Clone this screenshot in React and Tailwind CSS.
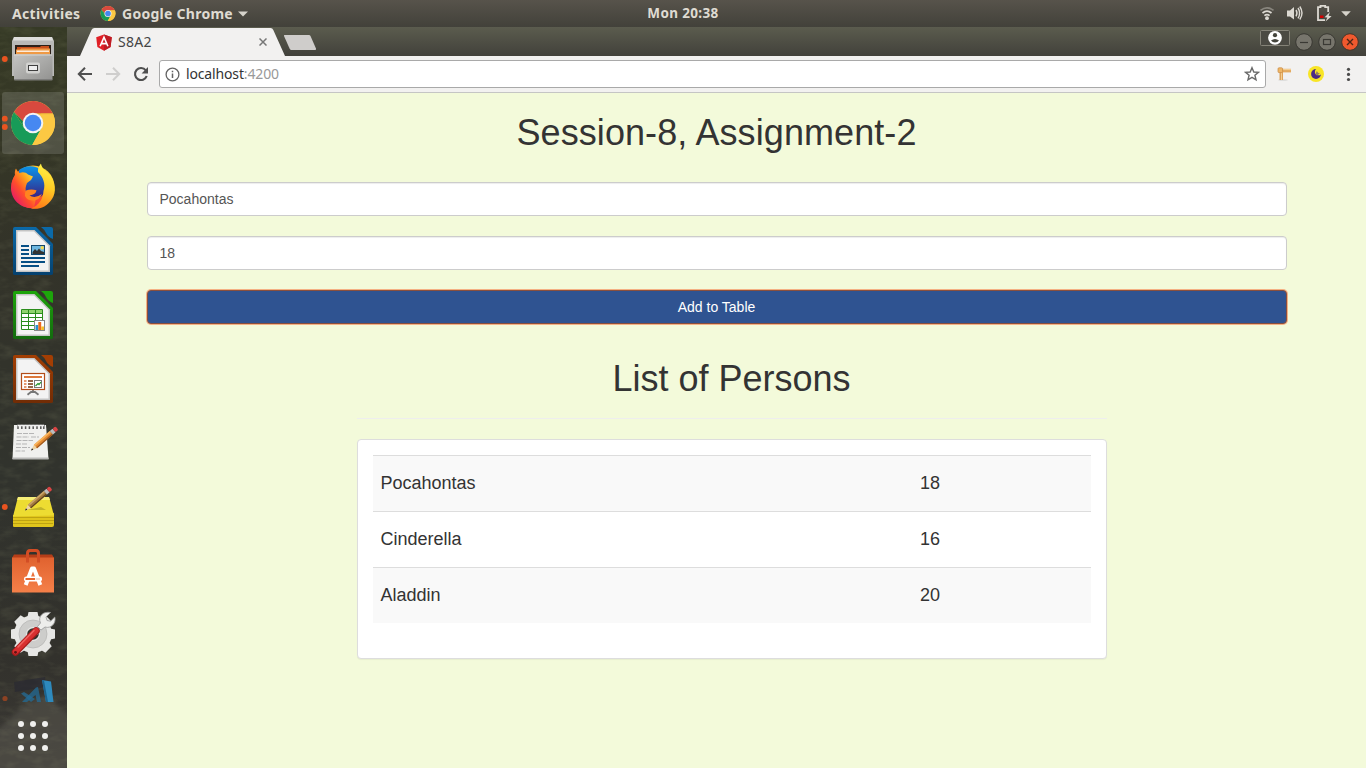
import React from "react";

const persons = [
  { name: "Pocahontas", age: 18 },
  { name: "Cinderella", age: 16 },
  { name: "Aladdin", age: 20 },
];

function ChromeLogo({ cx, cy, r }) {
  return (
    <g transform={`translate(${cx} ${cy}) scale(${r / 22})`}>
      <circle r="22" fill="#fcc843" />
      <path d="M-19.05 -11A22 22 0 0 1 19.9 -9.4H0L-9.4 -1Z" fill="#d8493e" />
      <path d="M-19.05 -11A22 22 0 0 0 -0.8 22L8.5 5.2L-8.7 5Z" fill="#189b58" />
      <path d="M19.9 -9.4A22 22 0 0 1 -0.8 22L8.7 5L8 -9.4Z" fill="#fcc843" />
      <path d="M-19.05 -11L-9.4 -1L-8.7 5Z" fill="#15884c" />
      <path d="M0 -10H20L19.9 -8.8H5Z" fill="#e2a334" opacity=".5" />
      <circle r="10.3" fill="#f4f4f4" />
      <circle r="8.3" fill="#4688f1" />
    </g>
  );
}

function Slot({ children, dots = [], active = false }) {
  return (
    <svg className="block h-16 w-[67px] shrink-0" viewBox="0 0 67 64">
      {active && <rect x="2" y="1" width="62" height="62" rx="3" fill="#fff" opacity=".14" />}
      {dots.map((y) => (
        <circle key={y} cx="4.8" cy={y} r="2.9" fill="#e95420" />
      ))}
      {children}
    </svg>
  );
}

function FilesIcon() {
  return (
    <Slot dots={[32]}>
      <defs>
        <linearGradient id="cab" x1="0" y1="0" x2="1" y2="1">
          <stop offset="0" stopColor="#c4c4c2" />
          <stop offset="1" stopColor="#929290" />
        </linearGradient>
      </defs>
      <path d="M14 10H52L54 14V49H12V14Z" fill="#b9b9b7" />
      <path d="M14 10H52L53 13.5H13Z" fill="#dededc" />
      <rect x="15" y="18" width="36" height="10" fill="#2c2018" />
      <path d="M17 20H40L41 19H49V28H17Z" fill="#c9501b" />
      <path d="M16 22.5H20L21 21.5H50V28H16Z" fill="#ef9a45" />
      <rect x="17" y="23.6" width="32" height="1.2" fill="#fff" />
      <rect x="14" y="27.3" width="38.5" height="26" rx="1" fill="url(#cab)" />
      <path d="M14 28H52" stroke="#d6d6d4" />
      <rect x="26" y="35.5" width="14" height="11" rx="2" fill="#d2d2d0" />
      <rect x="28.5" y="38.5" width="9" height="5" fill="#eee" stroke="#3f3f3f" />
      <rect x="14" y="52.3" width="38.5" height="1" fill="#71716f" />
    </Slot>
  );
}

function FirefoxIcon() {
  return (
    <Slot>
      <defs>
        <linearGradient id="fx" x1=".9" y1=".05" x2=".15" y2=".9">
          <stop offset="0" stopColor="#fff33f" />
          <stop offset=".35" stopColor="#ff9a1c" />
          <stop offset=".62" stopColor="#ff4e2b" />
          <stop offset="1" stopColor="#e4166b" />
        </linearGradient>
        <linearGradient id="fxb" x1="0" y1="0" x2="0" y2="1">
          <stop offset="0" stopColor="#0a95ea" />
          <stop offset="1" stopColor="#3a1c80" />
        </linearGradient>
        <linearGradient id="fxt" x1=".6" y1="0" x2=".4" y2="1">
          <stop offset="0" stopColor="#fff44a" />
          <stop offset=".5" stopColor="#ffcb24" />
          <stop offset="1" stopColor="#ff7a19" />
        </linearGradient>
      </defs>
      <circle cx="33" cy="32" r="21.5" fill="url(#fx)" />
      <path d="M19 15Q27 9 37 12.5Q47 17 47 29Q46 42 35 44Q22 43 19 30Z" fill="url(#fxb)" />
      <path d="M16 13.5C17 15.5 18 17 19.5 18C23 16.5 26 17.5 28 19.5L33 21.5L31 25L27 28L26 31C24 37 29 43 36 43L34 53C20 54 11 44 11 33C11 27 13 23 15 20C14.5 17.5 15 15 16 13.5Z" fill="url(#fx)" />
      <path d="M41 8.5C41.5 13 46 17 50 20C55 27 57 37 52 44C47 52 39 55 31 53.5C40 50 43 43 43.5 36C46 29 43 22 38 17C37.5 14 39 11 41 8.5Z" fill="url(#fxt)" />
      <path d="M26 35.5Q31 33.5 36.5 35.3Q36 39.5 29.5 40.5Q35 44 42 39Q38 48 28 44.5Q23 41 26 35.5Z" fill="#ff8420" />
    </Slot>
  );
}

function OfficeDoc({ id, top, bottom, children }) {
  return (
    <Slot>
      <defs>
        <linearGradient id={id} x1="0" y1="0" x2="0" y2="1">
          <stop offset="0" stopColor={top} />
          <stop offset="1" stopColor={bottom} />
        </linearGradient>
      </defs>
      <path d="M15 8H36L53 25V54.5Q53 56 51 56H15Q13 56 13 54.5V10Q13 8 15 8Z" fill={`url(#${id})`} />
      <path d="M41 8H51Q53 8 53 10V20Q48 18 46 14Q44 10 41 8Z" fill={top} />
      <path d="M16 11H34.5L50 26.5V53H16Z" fill="#c4c4c4" />
      <path d="M17.5 12.5H34L48.5 27V51.5H17.5Z" fill="#f3f3f3" />
      {children}
    </Slot>
  );
}

function WriterIcon() {
  return (
    <OfficeDoc id="doc-writer" top="#0b69a8" bottom="#05416f">
      <path d="M21 27H29M21 31H29M21 35H29M21 39H45M21 43H45M21 47H39" stroke="#074f85" strokeWidth="1.9" />
      <rect x="31.5" y="26.5" width="13" height="9" fill="#6db6e0" stroke="#12466c" />
      <path d="M32.5 35V33L35 30L37 32L39 29.5L41 32L44 33V35Z" fill="#333" />
      <circle cx="42.2" cy="28.7" r="1.7" fill="#f8d84b" />
    </OfficeDoc>
  );
}

function CalcIcon() {
  return (
    <OfficeDoc id="doc-calc" top="#1da50b" bottom="#136a0e">
      <rect x="21.5" y="26.5" width="21" height="20" fill="#fff" />
      <rect x="21.5" y="26.5" width="21" height="4" fill="#8fd36d" />
      <path d="M21.5 26.5H42.5V46.5H21.5ZM21.5 30.5H42.5M21.5 34.5H42.5M21.5 38.5H42.5M21.5 42.5H42.5M28.5 26.5V46.5M35.5 26.5V46.5" fill="none" stroke="#2a8c1c" strokeWidth="1" />
      <rect x="34.5" y="37.5" width="10" height="10" fill="#fff" stroke="#888" />
      <rect x="35.5" y="42" width="2.8" height="5" fill="#2a90cf" />
      <rect x="38.3" y="39" width="2.9" height="8" fill="#ed6b1e" />
      <rect x="41.2" y="43.5" width="2.8" height="3.5" fill="#f7bf28" />
    </OfficeDoc>
  );
}

function ImpressIcon() {
  return (
    <OfficeDoc id="doc-impress" top="#a33e03" bottom="#712c05">
      <path d="M33 43V46M27.5 47.8L31 45H35L38.5 47.8" fill="none" stroke="#777" strokeWidth="1.8" />
      <rect x="21.5" y="26.5" width="23" height="16" fill="#fff" stroke="#b24d19" strokeWidth="1.2" />
      <path d="M24 30H42" stroke="#da6a28" strokeWidth="1.8" />
      <path d="M24 34H26.5M24 37H26.5M24 40H26.5" stroke="#dc7943" strokeWidth="1.4" />
      <path d="M28 34H33M28 37H33M28 40H33" stroke="#74350e" strokeWidth="1.4" />
      <rect x="34.5" y="33.5" width="7" height="7" fill="#fff" stroke="#777" />
      <path d="M35.5 39L38 36.5L39 37.5L41 35" fill="none" stroke="#25942b" strokeWidth="1.2" />
    </OfficeDoc>
  );
}

function Pencil({ x, y, length = 32, dark = false }) {
  return (
    <g transform={`translate(${x} ${y}) rotate(-41)`}>
      <path d="M0 0L6 -2.4V2.4Z" fill="#eed3a2" />
      <path d="M0 0L2.2 -1V1Z" fill="#222" />
      <rect x="6" y="-2.4" width={length - 13} height="4.8" fill={dark ? "#a47a3e" : "#e48a31"} />
      <rect x="6" y="-2.4" width={length - 13} height="1.6" fill={dark ? "#c9a468" : "#f9b65f"} />
      <rect x="6" y="1.1" width={length - 13} height="1.3" fill={dark ? "#62441e" : "#9d5820"} />
      <rect x={length - 7} y="-2.4" width="3.5" height="4.8" fill="#bdbdbd" />
      <rect x={length - 3.5} y="-2.4" width="3.8" height="4.8" rx="1.5" fill="#d94444" />
    </g>
  );
}

function EditorIcon() {
  return (
    <Slot>
      <path d="M14 14H46L48.5 48H12.5Z" fill="#f0f0ee" />
      <path d="M12.5 46.5H48.3L48.6 48.5H12.5Z" fill="#b8b8b6" />
      <path d="M18 13.5V18M21.8 13.5V18M25.6 13.5V18M29.4 13.5V18M33.2 13.5V18M37 13.5V18M40.8 13.5V18M43.8 13.5V18" stroke="#555" strokeWidth="1.5" />
      <path d="M17.5 14.5H44" stroke="#eee" strokeWidth="1.6" />
      <path d="M17 22.5H34M16.5 26H29M31 26H39M16.5 29.5H33M16 33H27M16 36.5H30M15.5 40H25" stroke="#b5b5b5" strokeDasharray="5 1" />
      <Pencil x="31" y="39.5" length={34} />
    </Slot>
  );
}

function NotesIcon() {
  return (
    <Slot dots={[32]}>
      <path d="M13 40L54 38V50Q54 52 52 52H14Q13 52 13 51Z" fill="#e0c51c" />
      <path d="M18 22H49L54 40.5L13 41.5Z" fill="#eddc32" />
      <path d="M18 22H49L50 25H17Z" fill="#f6ee78" />
      <path d="M13 42.5H54M13 45.5H54M13 48.5H53" stroke="#b59b10" strokeWidth=".8" />
      <path d="M27 35H46L41 32Z" fill="#8f8420" opacity=".45" />
      <Pencil x={25} y={35.5} length={34} dark />
    </Slot>
  );
}

function SoftwareIcon() {
  return (
    <Slot>
      <defs>
        <linearGradient id="bag" x1="0" y1="0" x2="0" y2="1">
          <stop offset="0" stopColor="#e0622f" />
          <stop offset="1" stopColor="#f58049" />
        </linearGradient>
      </defs>
      <path d="M14 15.5H52L54 19H12Z" fill="#b63e18" />
      <rect x="12" y="18.5" width="42" height="35" fill="url(#bag)" />
      <path d="M27.5 23.5V14.5Q27.5 11.5 30 11.5H36Q38.5 11.5 38.5 14.5V23.5" fill="none" stroke="#d24d25" strokeWidth="3" />
      <path d="M25.7 46L32 29.5H34L40.3 46" fill="none" stroke="#fff" strokeWidth="4" strokeLinejoin="round" />
      <rect x="24" y="37.5" width="18" height="5" rx="2.3" fill="#fff" />
      <path d="M25.5 40H35" stroke="#e76630" strokeWidth="2" />
      <path d="M35.5 40H40" stroke="#f7cdb8" strokeWidth="1.5" />
    </Slot>
  );
}

function SettingsIcon() {
  const teeth = [0, 45, 90, 135, 180, 225, 270, 315];
  return (
    <Slot>
      <g transform="translate(33 31)">
        {teeth.map((a) => (
          <path key={a} d="M-5.8 -16L-4.5 -22H4.5L5.8 -16Z" fill="#e6e6e4" transform={`rotate(${a})`} />
        ))}
        <circle r="12.3" fill="none" stroke="#e6e6e4" strokeWidth="13" />
        <circle r="10.5" fill="none" stroke="#cdcdcb" strokeWidth="7" />
        <circle r="14" fill="none" stroke="#b5b5b3" strokeWidth=".7" />
      </g>
      <path d="M35 30L43 22" stroke="#c8c8c8" strokeWidth="6" />
      <path d="M50.5 9.5L46 14L47 17.5L50.5 18.2L54.8 14C56.5 20 51 26 45 24L41 27L37.5 23.5L40.5 20C37.5 13.5 43 8 50.5 9.5Z" fill="#ededeb" stroke="#999" strokeWidth=".8" />
      <path d="M15.5 49L36 28" stroke="#a51b1b" strokeWidth="7.4" strokeLinecap="round" />
      <path d="M15.5 48.6L36 27.6" stroke="#d83030" strokeWidth="5.4" strokeLinecap="round" />
      <path d="M18 44L34 27.5" stroke="#ef6460" strokeWidth="1.5" strokeLinecap="round" />
      <circle cx="15.5" cy="49.3" r="1.4" fill="#5d1212" />
    </Slot>
  );
}

function CodeIcon() {
  return (
    <svg className="block h-9 w-[67px] shrink-0" viewBox="0 0 67 36">
      <path d="M14 15L45 10L46 20L15 25Z" fill="#292932" opacity=".7" />
      <path d="M42 13L51 14.5L53.5 35H46Z" fill="#2e8abd" />
      <path d="M42 13L44 13.4L48 35H46Z" fill="#1c638e" />
      <path d="M21 26.5L24 25L35 32L31 35Z" fill="#246c95" opacity=".75" />
      <path d="M36 20.5L38 20L41 35H37L35.5 28L27 35H22Z" fill="#236b96" opacity=".75" />
      <circle cx="5" cy="31.5" r="2.6" fill="#8c4223" />
    </svg>
  );
}

function Wallpaper() {
  return (
    <svg className="absolute inset-0 h-full w-full" viewBox="0 0 67 741" preserveAspectRatio="none">
      <defs>
        <linearGradient id="wall" x1="0" y1="0" x2="0" y2="1">
          <stop offset="0" stopColor="#363a26" />
          <stop offset=".12" stopColor="#353725" />
          <stop offset=".3" stopColor="#333329" />
          <stop offset=".6" stopColor="#31332d" />
          <stop offset=".85" stopColor="#32312c" />
          <stop offset="1" stopColor="#3b3935" />
        </linearGradient>
        <filter id="grain" x="0" y="0" width="100%" height="100%">
          <feTurbulence type="fractalNoise" baseFrequency=".06 .13" numOctaves="3" seed="8" />
          <feColorMatrix values="0 0 0 0 .42  0 0 0 0 .44  0 0 0 0 .24  1.6 0 0 0 -.68" />
        </filter>
        <filter id="soft"><feGaussianBlur stdDeviation="2" /></filter>
      </defs>
      <rect width="67" height="741" fill="url(#wall)" />
      <path d="M-5 705L22 680L45 668L72 690V745H-5Z" fill="#55524c" opacity=".6" filter="url(#soft)" />
      <rect width="67" height="741" filter="url(#grain)" opacity=".16" />
    </svg>
  );
}

function Dock() {
  return (
    <aside className="relative h-[741px] w-[67px] shrink-0 overflow-hidden bg-[#35362a]">
      <Wallpaper />
      <div className="relative flex flex-col">
        <FilesIcon />
        <Slot active dots={[27.7, 36]}>
          <ChromeLogo cx={33} cy={32} r={22} />
        </Slot>
        <FirefoxIcon />
        <WriterIcon />
        <CalcIcon />
        <ImpressIcon />
        <EditorIcon />
        <NotesIcon />
        <SoftwareIcon />
        <SettingsIcon />
        <CodeIcon />
        <svg className="block h-[65px] w-[67px]" viewBox="0 0 67 65">
          {[21, 33, 45].map((y) =>
            [21, 33, 45].map((x) => <circle key={`${x}-${y}`} cx={x} cy={y} r="3" fill="#f0f0ee" />)
          )}
        </svg>
      </div>
    </aside>
  );
}

function TopBar() {
  return (
    <header className="grid h-[27px] grid-cols-[1fr_auto_1fr] items-center bg-gradient-to-b from-[#57534b] to-[#42413a] font-['Noto_Sans',sans-serif] text-[14px] font-bold leading-[27px] text-[#dfdbd2]">
      <div className="flex items-center pl-3">
        <span className="w-[88px] tracking-[0.35px]">Activities</span>
        <svg className="mr-[6px] h-4 w-4" viewBox="0 0 16 16">
          <ChromeLogo cx={8} cy={7.5} r={7.5} />
        </svg>
        <span className="w-[116px] whitespace-nowrap tracking-[0.27px]">Google Chrome</span>
        <svg className="h-[6px] w-[10px]" viewBox="0 0 10 6"><path d="M0 .5H10L5 5.5Z" fill="#d6d3cb" /></svg>
      </div>
      <span className="text-[13.5px] tracking-[0.35px]">Mon 20:38</span>
      <div className="flex items-center justify-end pr-[15px]">
        <svg className="h-[27px] w-[92px]" viewBox="1259 0 92 27">
          <g fill="none" stroke="#dcd9d2" strokeWidth="1.7">
            <path d="M1260.5 10.4Q1267 5.2 1273.5 10.4" opacity=".4" />
            <path d="M1262.5 13Q1267 9.4 1271.5 13" />
            <path d="M1264.4 15.6Q1267 13.6 1269.6 15.6" />
          </g>
          <circle cx="1267" cy="18.2" r="1.9" fill="#dcd9d2" />
          <path d="M1287 10.5H1290L1294 7V19.5L1290 16.5H1287Z" fill="#dcd9d2" />
          <path d="M1296 10Q1298 13 1296 16.3M1298 8Q1301.2 13 1298 18.3M1299.8 6.5Q1304.2 13 1299.8 19.5" fill="none" stroke="#dcd9d2" strokeWidth="1.4" />
          <path d="M1325 20.2H1318V7.2H1320.5V5.8H1325.2V7.2H1328.2V12" fill="none" stroke="#dcd9d2" strokeWidth="1.8" />
          <path d="M1320 15.5H1323.5V18H1320Z" fill="#d30000" />
          <path d="M1330 12L1324.6 17.2L1327.4 17.5L1325.5 21.5L1331.6 16.3L1328.6 15.8Z" fill="#dcd9d2" />
          <path d="M1341.2 11.2H1350.8L1346 16.2Z" fill="#d6d3cb" />
        </svg>
      </div>
    </header>
  );
}

function TabStrip() {
  return (
    <div className="flex h-[29px] bg-gradient-to-b from-[#5b5c4e] to-[#42413b]">
      <div className="relative ml-[13px] h-[29px] w-[205px] shrink-0">
        <svg className="absolute inset-0 h-full w-full" viewBox="0 0 205 29">
          <path d="M0 29L11.5 3Q12.5 1 14.5 1H190.5Q192.5 1 193.3 3L205 29Z" fill="#f2f1f0" />
        </svg>
        <div className="relative flex h-[29px] items-center pl-4 pt-px">
          <svg className="h-[17px] w-4" viewBox="0 0 16 17">
            <path d="M8 .5L15.8 3.2L14.6 13L8 16.7L1.4 13L.2 3.2Z" fill="#e02026" />
            <path d="M8 .5L15.8 3.2L14.6 13L8 16.7Z" fill="#bd1c24" />
            <path d="M4.1 12.2L8 3.3L11.9 12.2M5.5 9.6H10.5" fill="none" stroke="#fff" strokeWidth="1.6" />
          </svg>
          <span className="ml-[6px] font-['Noto_Sans',sans-serif] text-[14px] leading-4 tracking-[0.3px] text-[#444]">S8A2</span>
          <svg className="absolute left-[179px] top-[11px] h-2 w-2" viewBox="0 0 8 8">
            <path d="M.5 .5L7.5 7.5M7.5 .5L.5 7.5" stroke="#777" strokeWidth="1.5" />
          </svg>
        </div>
      </div>
      <svg className="ml-[-2px] mt-[7px] h-[17px] w-[34px]" viewBox="0 0 34 17">
        <path d="M1.5 1H26Q27 1 27.5 2L33 14.5Q33.4 16 32 16H8.5Q7.3 16 6.8 15L1 2Q.7 1 1.5 1Z" fill="#cfcdcb" />
      </svg>
      <div className="flex flex-1 justify-end pr-[7px]">
        <svg className="h-[29px] w-[100px]" viewBox="1259 27 100 29">
          <rect x="1260.5" y="30.5" width="29" height="15" rx="1" fill="#4b4a43" stroke="#858378" />
          <circle cx="1275" cy="37.8" r="6.9" fill="#fff" />
          <circle cx="1275" cy="35.2" r="2.1" fill="#45453d" />
          <path d="M1271 40.4Q1275 37.4 1279 40.4Q1277.5 42.5 1275 42.5Q1272.5 42.5 1271 40.4Z" fill="#45453d" />
          <circle cx="1304" cy="42" r="8.3" fill="#77756c" stroke="#393832" />
          <path d="M1300 42.5H1308" stroke="#3a3934" strokeWidth="1.2" />
          <circle cx="1327" cy="42" r="8.3" fill="#77756c" stroke="#393832" />
          <rect x="1323.5" y="39.5" width="7" height="5" fill="none" stroke="#3a3934" strokeWidth="1.2" />
          <circle cx="1350" cy="42" r="8.3" fill="#f0592e" stroke="#46352a" />
          <path d="M1347 39L1353 45M1353 39L1347 45" stroke="#4b2616" strokeWidth="1.4" />
        </svg>
      </div>
    </div>
  );
}

function Toolbar() {
  return (
    <div className="flex h-[37px] items-center border-b border-[#c5c5c4] bg-[#f2f1f0]">
      <svg className="h-[36px] w-[92px] shrink-0" viewBox="67 56 92 36">
        <path d="M92 74H79.5M85 67.8L78.8 74L85 80.2" fill="none" stroke="#4f4f4f" strokeWidth="2" />
        <path d="M106 74H118.5M113 67.8L119.2 74L113 80.2" fill="none" stroke="#cfcecd" strokeWidth="2" />
        <path d="M145.8 70.4A6 6 0 1 0 146.7 76" fill="none" stroke="#4f4f4f" strokeWidth="2.1" />
        <path d="M148 67V73.4H141.6Z" fill="#4f4f4f" />
      </svg>
      <div className="flex h-7 flex-1 items-center rounded-[3px] border border-[#a9a9a9] bg-white pl-[5px] pr-[5px]">
        <svg className="h-[15px] w-[15px]" viewBox="0 0 15 15">
          <circle cx="7.5" cy="7.5" r="6.4" fill="none" stroke="#626262" strokeWidth="1.3" />
          <path d="M7.5 6.5V11M7.5 3.8V5.2" stroke="#626262" strokeWidth="1.5" />
        </svg>
        <span className="ml-[6px] flex-1 font-['Noto_Sans',sans-serif] text-[14px] leading-5 tracking-[-0.15px] text-[#333]">
          localhost<span className="text-[#999]">:4200</span>
        </span>
        <svg className="h-4 w-4" viewBox="0 0 16 16">
          <path d="M8 1.7L9.8 6L14.4 6.3L10.9 9.2L12 13.8L8 11.3L4 13.8L5.1 9.2L1.6 6.3L6.2 6Z" fill="none" stroke="#6a6a6a" strokeWidth="1.4" />
        </svg>
      </div>
      <svg className="h-[36px] w-[100px] shrink-0" viewBox="1266 56 100 36">
        <ellipse cx="1283" cy="80" rx="5" ry=".8" fill="#d8d7d6" />
        <path d="M1279.5 71H1283V80H1279.5Z" fill="#dea258" />
        <path d="M1281.5 70.5V80" stroke="#f4cf91" />
        <rect x="1281" y="68.8" width="10" height="3.6" fill="#e4aa5f" />
        <path d="M1283 69.6H1291" stroke="#f5d298" />
        <rect x="1278" y="67.8" width="4.6" height="4.8" rx="1" fill="#efb666" stroke="#c98a43" strokeWidth=".7" />
        <circle cx="1316" cy="74" r="8" fill="#f8e526" />
        <circle cx="1316" cy="74" r="4.9" fill="#4d2a86" />
        <circle cx="1318.3" cy="71.9" r="3.4" fill="#f8e526" />
        <path d="M1316.8 71L1318.3 73L1320 73.2L1318.5 74.3L1318 76L1316.6 74.8L1315 75L1315.8 73.5Z" fill="#4d2a86" opacity=".55" />
        <g fill="#4b4b4b">
          <circle cx="1348.5" cy="69.3" r="1.6" /><circle cx="1348.5" cy="74.4" r="1.6" /><circle cx="1348.5" cy="79.5" r="1.6" />
        </g>
      </svg>
    </div>
  );
}

const fieldClass =
  "block h-[34px] w-full rounded border border-[#ccc] bg-white px-3 py-[6px] text-[14px] leading-5 text-[#555] shadow-[inset_0_1px_1px_rgba(0,0,0,0.075)] outline-none";

function Page() {
  return (
    <main className="flex-1 bg-[#f3fada] font-['Liberation_Sans',sans-serif] text-[#333]">
      <div className="mx-auto flex w-[1140px] flex-col pt-5">
        <h1 className="text-center text-[36px] font-medium leading-[39.6px] tracking-[0.08px]">Session-8, Assignment-2</h1>
        <form className="mt-[29.6px] flex flex-col gap-5" onSubmit={(e) => e.preventDefault()}>
          <input className={fieldClass} defaultValue="Pocahontas" />
          <input className={fieldClass} defaultValue="18" />
          <button className="h-[34px] w-full rounded border border-[#8a4f3d] bg-[#2f5391] text-[14px] leading-5 text-white shadow-[0_0_0_1px_#f4b184]">
            Add to Table
          </button>
        </form>
        <section className="ml-[210px] mt-[34.6px] w-[750px]">
          <h1 className="text-center text-[36px] font-medium leading-[39.6px]">List of Persons</h1>
          <hr className="mb-5 mt-[19.4px] border-t border-[#eee]" />
          <div className="rounded border border-[#ddd] bg-white p-[15px] shadow-[0_1px_1px_rgba(0,0,0,0.05)]">
            <table className="mb-5 w-full table-fixed border-collapse text-[18px]">
              <tbody>
                {persons.map((p) => (
                  <tr key={p.name} className="h-14 border-t border-[#ddd] odd:bg-[#f9f9f9]">
                    <td className="w-3/4 px-2">{p.name}</td>
                    <td className="w-1/4 pl-[9px] pr-2">{p.age}</td>
                  </tr>
                ))}
              </tbody>
            </table>
          </div>
        </section>
      </div>
    </main>
  );
}

export default function App() {
  return (
    <div className="flex h-[768px] w-[1366px] flex-col overflow-hidden">
      <TopBar />
      <div className="flex flex-1">
        <Dock />
        <div className="flex min-w-0 flex-1 flex-col">
          <TabStrip />
          <Toolbar />
          <Page />
        </div>
      </div>
    </div>
  );
}
